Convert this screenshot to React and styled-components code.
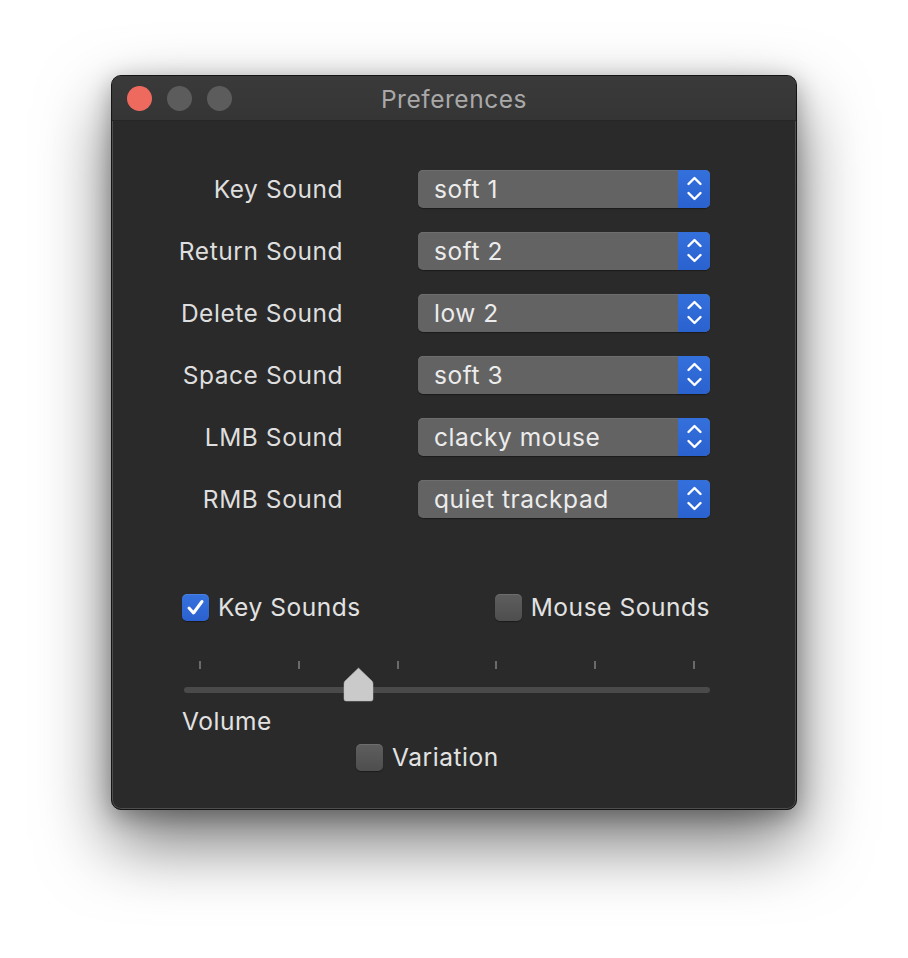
import React from 'react';
import styled, { createGlobalStyle } from 'styled-components';

const GlobalStyle = createGlobalStyle`
  html, body {
    margin: 0;
    padding: 0;
    background: #ffffff;
  }
  body {
    font-family: Inter, "Liberation Sans", sans-serif;
    -webkit-font-smoothing: antialiased;
  }
`;

const sounds = [
  { label: 'Key Sound', value: 'soft 1' },
  { label: 'Return Sound', value: 'soft 2' },
  { label: 'Delete Sound', value: 'low 2' },
  { label: 'Space Sound', value: 'soft 3' },
  { label: 'LMB Sound', value: 'clacky mouse' },
  { label: 'RMB Sound', value: 'quiet trackpad' },
];

const TICKS = 6;
const VOLUME = 0.32;

const Chevrons = () => (
  <svg width="32" height="38" viewBox="0 0 32 38">
    <path
      d="M10.5 14 L16.5 8 L22.5 14 M10.5 23 L16.5 29 L22.5 23"
      fill="none"
      stroke="#ffffff"
      strokeWidth="2.4"
      strokeLinecap="round"
      strokeLinejoin="round"
    />
  </svg>
);

const Check = () => (
  <svg width="27" height="27" viewBox="0 0 27 27">
    <path
      d="M7 14 L11.5 19 L20 7.5"
      fill="none"
      stroke="#ffffff"
      strokeWidth="3"
      strokeLinecap="round"
      strokeLinejoin="round"
    />
  </svg>
);

const ThumbShape = () => (
  <svg width="31" height="35" viewBox="0 0 31 35">
    <path
      d="M15.5 1 L29 14 Q30 15 30 17 L30 32 Q30 34 28 34 L3 34 Q1 34 1 32 L1 17 Q1 15 2 14 Z"
      fill="#cacaca"
      stroke="#b8b8b8"
      strokeWidth="0.5"
    />
  </svg>
);

const Popup = ({ value }) => (
  <PopupBox>
    <PopupText>{value}</PopupText>
    <Stepper>
      <Chevrons />
    </Stepper>
  </PopupBox>
);

const Checkbox = ({ checked, label }) => (
  <CheckLabel>
    <Box checked={checked}>{checked && <Check />}</Box>
    <span>{label}</span>
  </CheckLabel>
);

const App = () => {
  return (
    <>
      <GlobalStyle />
      <Page>
        <Window>
          <TitleBar>
            <Lights>
              <Light color="#ee6a5f" />
              <Light color="#5c5c5c" />
              <Light color="#5c5c5c" />
            </Lights>
            <Title>Preferences</Title>
            <div />
          </TitleBar>
          <Content>
            <FormGrid>
              {sounds.map((s) => (
                <React.Fragment key={s.label}>
                  <Label>{s.label}</Label>
                  <Popup value={s.value} />
                </React.Fragment>
              ))}
            </FormGrid>
            <Lower>
              <CheckRow>
                <Checkbox checked label="Key Sounds" />
                <Checkbox label="Mouse Sounds" />
              </CheckRow>
              <Slider>
                <Ticks>
                  {Array.from({ length: TICKS }).map((_, i) => (
                    <Tick key={i} />
                  ))}
                </Ticks>
                <Track />
                <Thumb style={{ left: `calc(${VOLUME * 100}% - ${VOLUME * 30}px)` }}>
                  <ThumbShape />
                </Thumb>
              </Slider>
              <VolumeLabel>Volume</VolumeLabel>
              <VariationRow>
                <Checkbox label="Variation" />
              </VariationRow>
            </Lower>
          </Content>
        </Window>
      </Page>
    </>
  );
};

const Page = styled.div`
  display: flex;
  justify-content: center;
  padding-top: 75px;
  height: 958px;
  box-sizing: border-box;
`;

const Window = styled.div`
  width: 686px;
  height: 735px;
  box-sizing: border-box;
  background: #2a2a2a;
  border: 1px solid #151515;
  border-radius: 10px;
  overflow: hidden;
  box-shadow: inset 0 0 0 1px #4e4e4e, 0 32px 70px rgba(0, 0, 0, 0.55),
    0 6px 24px rgba(0, 0, 0, 0.3);
`;

const TitleBar = styled.div`
  display: grid;
  grid-template-columns: 1fr auto 1fr;
  align-items: center;
  height: 44px;
  background: linear-gradient(#3a3a3a, #353535);
  border-bottom: 1px solid #262626;
`;

const Lights = styled.div`
  display: flex;
  gap: 15px;
  padding-left: 15px;
`;

const Light = styled.div`
  width: 25px;
  height: 25px;
  border-radius: 50%;
  background: ${({ color }) => color};
`;

const Text = styled.div`
  font-size: 24.5px;
  letter-spacing: 0.55px;
  white-space: nowrap;
`;

const Title = styled(Text)`
  color: #a9a9a9;
  padding-top: 1px;
`;

const Content = styled.div`
  padding: 49px 86px 0 50px;
`;

const FormGrid = styled.div`
  display: grid;
  grid-template-columns: 181px 292px;
  grid-auto-rows: 38px;
  column-gap: 75px;
  row-gap: 24px;
  align-items: center;
`;

const Label = styled(Text)`
  text-align: right;
  color: #dedede;
`;

const PopupBox = styled.div`
  display: flex;
  height: 38px;
  border-radius: 5px;
  overflow: hidden;
  background: #636363;
  box-shadow: inset 0 1px 0 #6e6e6e, 0 1px 1px rgba(0, 0, 0, 0.35);
`;

const PopupText = styled(Text)`
  flex: 1;
  display: flex;
  align-items: center;
  padding-left: 16px;
  color: #ececec;
`;

const Stepper = styled.div`
  width: 32px;
  display: flex;
  background: linear-gradient(#3470dc, #2a62cf);
`;

const Lower = styled.div`
  padding-left: 20px;
`;

const CheckRow = styled.div`
  display: flex;
  justify-content: space-between;
  margin-top: 74px;
  width: 528px;
`;

const CheckLabel = styled.label`
  display: inline-flex;
  align-items: center;
  gap: 9px;
  height: 30px;
  font-size: 24.5px;
  letter-spacing: 0.55px;
  white-space: nowrap;
  color: #e2e2e2;
`;

const Box = styled.div`
  width: 27px;
  height: 27px;
  box-sizing: border-box;
  border-radius: 5px;
  display: flex;
  background: ${({ checked }) =>
    checked
      ? 'linear-gradient(#3572de, #2b61cf)'
      : 'linear-gradient(#5e5e5e, #4e4e4e)'};
  box-shadow: inset 0 1px 0 rgba(255, 255, 255, 0.1),
    0 1px 1px rgba(0, 0, 0, 0.35);
`;

const Slider = styled.div`
  position: relative;
  margin: 39px 0 0 2px;
  width: 526px;
  height: 44px;
`;

const Ticks = styled.div`
  display: flex;
  justify-content: space-between;
  padding: 0 15px;
`;

const Tick = styled.div`
  width: 2px;
  height: 8px;
  background: #6a6a6a;
`;

const Track = styled.div`
  margin-top: 18px;
  height: 6px;
  border-radius: 3px;
  background: #4a4a4a;
`;

const Thumb = styled.div`
  position: absolute;
  top: 6px;
  width: 31px;
  height: 35px;
  display: flex;
`;

const VolumeLabel = styled(Text)`
  margin-top: 1px;
  color: #e2e2e2;
`;

const VariationRow = styled.div`
  display: flex;
  padding-left: 174px;
  margin-top: 6px;
`;

export default App;
